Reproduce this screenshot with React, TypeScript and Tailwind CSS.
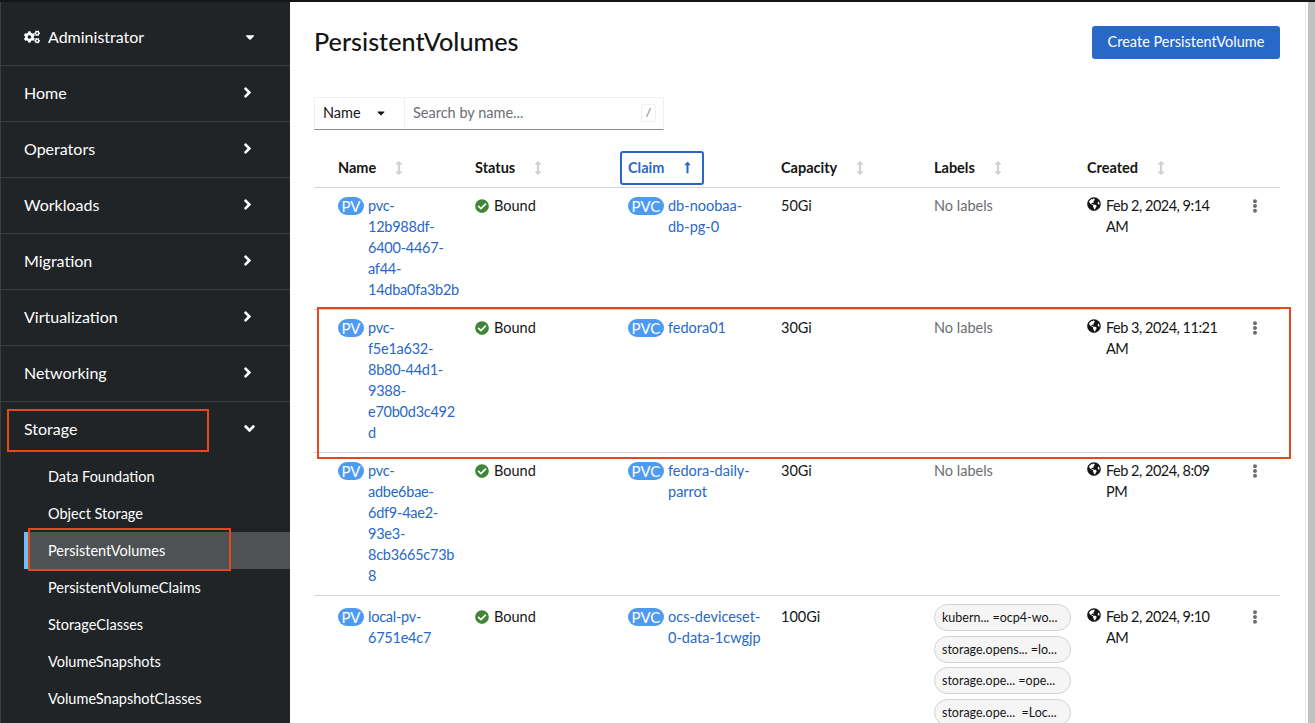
import { FaCogs, FaCaretDown, FaAngleRight, FaAngleDown, FaCheckCircle, FaGlobeAmericas, FaEllipsisV, FaArrowsAltV, FaLongArrowAltUp } from 'react-icons/fa'

const NAV = ['Home', 'Operators', 'Workloads', 'Migration', 'Virtualization', 'Networking']
const STORAGE_ITEMS = ['Data Foundation', 'Object Storage', 'PersistentVolumes', 'PersistentVolumeClaims', 'StorageClasses', 'VolumeSnapshots', 'VolumeSnapshotClasses']

const ROWS = [
  {
    name: ['pvc-', '12b988df-', '6400-4467-', 'af44-', '14dba0fa3b2b'],
    claim: ['db-noobaa-', 'db-pg-0'],
    capacity: '50Gi',
    created: ['Feb 2, 2024, 9:14', 'AM'],
  },
  {
    name: ['pvc-', 'f5e1a632-', '8b80-44d1-', '9388-', 'e70b0d3c492', 'd'],
    claim: ['fedora01'],
    capacity: '30Gi',
    created: ['Feb 3, 2024, 11:21', 'AM'],
  },
  {
    name: ['pvc-', 'adbe6bae-', '6df9-4ae2-', '93e3-', '8cb3665c73b', '8'],
    claim: ['fedora-daily-', 'parrot'],
    capacity: '30Gi',
    created: ['Feb 2, 2024, 8:09', 'PM'],
  },
  {
    name: ['local-pv-', '6751e4c7'],
    claim: ['ocs-deviceset-', '0-data-1cwgjp'],
    capacity: '100Gi',
    created: ['Feb 2, 2024, 9:10', 'AM'],
    labels: ['kubern... =ocp4-wo...', 'storage.opens... =lo...', 'storage.ope... =ope...', 'storage.ope...  =Loc...'],
  },
]

const COLS = 'grid grid-cols-[137px_153px_153px_153px_153px_1fr] pl-6'

function Badge({ text }: { text: string }) {
  return (
    <span
      className={
        text === 'PV'
          ? 'mt-[2px] mr-1 flex h-[18px] w-[26px] shrink-0 items-center justify-center rounded-full bg-[#4d9bf0] text-[15px] leading-none tracking-normal text-white'
          : 'mt-[2px] mr-1 flex h-[18px] w-[36px] shrink-0 items-center justify-center rounded-full bg-[#4d9bf0] text-[15px] leading-none tracking-normal text-white'
      }
    >
      {text}
    </span>
  )
}

function Lines({ lines }: { lines: string[] }) {
  return (
    <div>
      {lines.map((l) => (
        <div key={l}>{l}</div>
      ))}
    </div>
  )
}

function SortHead({ label }: { label: string }) {
  return (
    <div className="flex h-[37px] items-center gap-[16px] pb-[4px] font-bold text-[#151515]">
      <span className="whitespace-nowrap">{label}</span>
      <FaArrowsAltV size={14} className="text-[#d2d2d2]" />
    </div>
  )
}

export default function App() {
  return (
    <div className="flex h-[723px] w-[1315px] flex-col overflow-hidden bg-white font-['Lato',sans-serif] text-[14.5px] leading-[21px] text-[#151515]">
      <div className="h-[2px] shrink-0 bg-[#151515]" />
      <div className="flex min-h-0 flex-1">
        {/* sidebar */}
        <aside className="w-[290px] shrink-0 border-l border-[#3c3f42] bg-[#212427] text-white">
          <div className="flex h-[64px] items-center justify-between border-b border-[#3c3f42] pl-[23px] pr-[33px] pt-[6px] text-[16px]">
            <span className="flex items-center gap-[8px]">
              <FaCogs size={16} />
              Administrator
            </span>
            <FaCaretDown size={14} />
          </div>
          {NAV.map((item) => (
            <div key={item} className="flex h-[56px] items-center justify-between border-b border-[#3c3f42] pb-[2px] pl-[23px] pr-[34px] text-[16px]">
              {item}
              <FaAngleRight size={17} className="-mt-[1px]" />
            </div>
          ))}
          <div className="flex h-[55px] items-center justify-between pb-[2px] pl-[23px] pr-[32px] text-[16px]">
            Storage
            <FaAngleDown size={17} />
          </div>
          <div className="pt-[1px]">
            {STORAGE_ITEMS.map((item) => (
              <div
                key={item}
                className={
                  item === 'PersistentVolumes'
                    ? 'ml-[23px] flex h-[37px] items-center border-l-4 border-[#73bcf7] bg-[#4f5255] pb-[1px] pl-[20px] text-[14.5px]'
                    : 'ml-[23px] flex h-[37px] items-center pb-[1px] pl-[24px] text-[14.5px]'
                }
              >
                {item}
              </div>
            ))}
          </div>
        </aside>

        {/* main */}
        <main className="min-w-0 flex-1 pl-6 pr-[25px]">
          <div className="flex items-start justify-between pt-[24px]">
            <h1 className="-mt-[1px] text-[25.2px] font-medium leading-[32px] text-[#151515]">PersistentVolumes</h1>
            <button className="h-[33px] w-[188px] rounded-[3px] bg-[#2868c8] pb-[2px] text-[14.5px] text-white">Create PersistentVolume</button>
          </div>

          <div className="mt-[38px] flex h-[33px] w-[350px] border border-[#f0f0f0] border-b-[#8a8d90]">
            <div className="flex w-[90px] items-center justify-between border-r border-[#f0f0f0] pb-[2px] pl-2 pr-[17px]">
              Name
              <FaCaretDown size={12} />
            </div>
            <div className="flex flex-1 items-center justify-between pb-[2px] pl-2 pr-[7px] text-[#6a6e73]">
              Search by name...
              <span className="flex h-[18px] w-[15px] items-center justify-center rounded-[2px] border border-[#f0f0f0] text-[12px]">/</span>
            </div>
          </div>

          <div className={`${COLS} mt-[21px] h-[37px] border-b border-[#d2d2d2]`}>
            <SortHead label="Name" />
            <SortHead label="Status" />
            <div className="-ml-2 h-[34px] w-[84px] rounded-[3px] border-2 border-[#2868c8] pb-[2px] pl-[6px] pr-[8px] font-bold text-[#2868c8]">
              <div className="flex h-[28px] items-center justify-between">
                Claim
                <FaLongArrowAltUp size={13} />
              </div>
            </div>
            <SortHead label="Capacity" />
            <SortHead label="Labels" />
            <SortHead label="Created" />
          </div>

          {ROWS.map((row) => (
            <div key={row.name.join('')} className={`${COLS} border-b border-[#d2d2d2] pb-[9px] pt-[7px]`}>
              <div className={row.labels ? 'flex pt-[3px] tracking-[-0.25px] text-[#2868c8]' : 'flex tracking-[-0.25px] text-[#2868c8]'}>
                <Badge text="PV" />
                <Lines lines={row.name} />
              </div>
              <div className={row.labels ? 'flex items-start gap-[5px] pt-[3px]' : 'flex items-start gap-[5px]'}>
                <FaCheckCircle size={14} className="mt-[4px] text-[#3e8635]" />
                Bound
              </div>
              <div className={row.labels ? 'flex pt-[3px] text-[#2868c8]' : 'flex text-[#2868c8]'}>
                <Badge text="PVC" />
                <Lines lines={row.claim} />
              </div>
              <div className={row.labels ? 'pt-[3px]' : ''}>{row.capacity}</div>
              <div>
                {row.labels ? (
                  <div className="mt-[1px] flex flex-col gap-[4.5px]">
                    {row.labels.map((label) => (
                      <span key={label} className="flex h-[27px] w-[137px] items-center whitespace-pre rounded-full border border-[#d2d2d2] bg-[#f5f5f5] px-[7px] text-[12.5px]">
                        {label}
                      </span>
                    ))}
                  </div>
                ) : (
                  <span className="text-[#6a6e73]">No labels</span>
                )}
              </div>
              <div className={row.labels ? 'flex justify-between pr-[18px] pt-[3px]' : 'flex justify-between pr-[18px]'}>
                <div className="flex gap-[5px]">
                  <FaGlobeAmericas size={14} className="mt-[2px] shrink-0" />
                  <div className="tracking-[-0.5px]">
                    <Lines lines={row.created} />
                  </div>
                </div>
                <FaEllipsisV size={14} className="mt-[4px] text-[#6a6e73]" />
              </div>
            </div>
          ))}
        </main>

        {/* scrollbar */}
        <div className="w-[10px] shrink-0 border-l border-[#ececec] pl-[2px]">
          <div className="h-full w-full bg-[#c1c1c1]" />
        </div>
      </div>

      {/* red annotation boxes drawn over the screenshot */}
      <div className="pointer-events-none absolute left-[7px] top-[409px] h-[43px] w-[202px] border-2 border-[#e8471c]" />
      <div className="pointer-events-none absolute left-[28px] top-[528px] h-[43px] w-[203px] border-2 border-[#e8471c]" />
      <div className="pointer-events-none absolute left-[317px] top-[307px] h-[152px] w-[974px] border-2 border-[#e8471c]" />
    </div>
  )
}
